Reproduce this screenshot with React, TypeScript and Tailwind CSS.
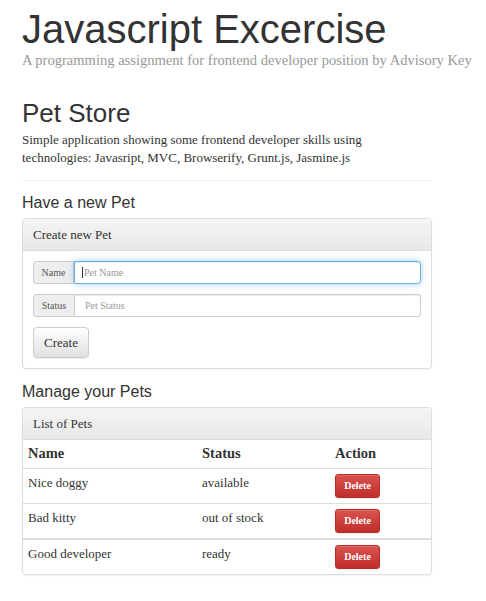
import React from "react";

const serif = "font-['Liberation_Serif','Times_New_Roman',serif]";
const sans = "font-['Liberation_Sans',Arial,sans-serif]";

function Panel({ title, children }: { title: string; children: React.ReactNode }) {
  return (
    <div className="w-[410px] mt-[5px] border border-[#dddddd] rounded-[4px] bg-white shadow-[0_1px_2px_rgba(0,0,0,0.05)] overflow-hidden">
      <div className={`h-[32px] box-border border-b border-[#dddddd] bg-[linear-gradient(to_bottom,#f5f5f5,#e8e8e8)] flex items-center px-[10px] text-[13px] text-[#333333] ${serif}`}>
        {title}
      </div>
      {children}
    </div>
  );
}

function DeleteButton() {
  return (
    <button className={`block w-[45px] h-[24px] rounded-[3px] border border-[#b92c28] bg-[linear-gradient(to_bottom,#d9534f,#c12e2a)] text-white text-[10px] font-bold shadow-[inset_0_1px_0_rgba(255,255,255,0.15),0_1px_1px_rgba(0,0,0,0.075)] ${serif}`}>
      Delete
    </button>
  );
}

const pets = [
  { name: "Nice doggy", status: "available" },
  { name: "Bad kitty", status: "out of stock" },
  { name: "Good developer", status: "ready" },
];

export default function App() {
  return (
    <div className="bg-white min-h-[601px] pl-[22px] text-[#333333]">
      <h1 className={`${sans} text-[40px] leading-[44px] pt-[7px] text-[#333333]`}>Javascript Excercise</h1>
      <p className={`${serif} text-[14.55px] leading-[18px] text-[#999999] whitespace-nowrap`}>
        A programming assignment for frontend developer position by Advisory Key
      </p>

      <h2 className={`${sans} text-[26px] leading-[30px] mt-[29px]`}>Pet Store</h2>
      <p className={`${serif} w-[400px] text-[13px] leading-[18px] mt-[3px]`}>
        Simple application showing some frontend developer skills using technologies: Javasript, MVC, Browserify, Grunt.js, Jasmine.js
      </p>
      <hr className="w-[410px] mt-[13px] border-0 border-t border-[#eeeeee]" />

      <h3 className={`${sans} text-[16px] leading-[20px] mt-[12px]`}>Have a new Pet</h3>
      <Panel title="Create new Pet">
        <div className="p-[10px] flex flex-col gap-[10px]">
          <div className="flex h-[23px]">
            <span className={`w-[41px] shrink-0 flex items-center justify-center bg-[#eeeeee] border border-[#cccccc] rounded-l-[3px] text-[10px] text-[#555555] ${serif}`}>Name</span>
            <div className="relative flex-1">
              <input
                readOnly
                placeholder="Pet Name"
                className={`block w-full h-full box-border border border-[#66afe9] rounded-r-[3px] px-[9px] text-[10px] outline-none placeholder:text-[#999999] shadow-[inset_0_1px_1px_rgba(0,0,0,0.075),0_0_6px_rgba(102,175,233,0.6)] ${serif}`}
              />
              <span className="absolute left-[8px] top-[6px] w-px h-[11px] bg-[#333333]" />
            </div>
          </div>
          <div className="flex h-[23px]">
            <span className={`w-[42px] shrink-0 flex items-center justify-center bg-[#eeeeee] border border-[#cccccc] rounded-l-[3px] text-[10px] text-[#555555] ${serif}`}>Status</span>
            <input
              readOnly
              placeholder="Pet Status"
              className={`block flex-1 h-full box-border border border-l-0 border-[#cccccc] rounded-r-[3px] px-[10px] text-[10px] outline-none placeholder:text-[#999999] shadow-[inset_0_1px_1px_rgba(0,0,0,0.075)] ${serif}`}
            />
          </div>
          <div className="flex">
            <button className={`block w-[56px] h-[31px] rounded-[4px] border border-[#cccccc] bg-[linear-gradient(to_bottom,#ffffff,#e0e0e0)] text-[13px] text-[#333333] shadow-[inset_0_1px_0_rgba(255,255,255,0.15),0_1px_1px_rgba(0,0,0,0.075)] ${serif}`}>
              Create
            </button>
          </div>
        </div>
      </Panel>

      <h3 className={`${sans} text-[16px] leading-[20px] mt-[13px]`}>Manage your Pets</h3>
      <Panel title="List of Pets">
        <div className={`${serif}`}>
          <div className="grid grid-cols-[174px_133px_1fr] h-[29px] box-border border-b border-[#dddddd] items-center text-[14.5px] font-bold">
            <div className="px-[5px]">Name</div>
            <div className="px-[5px]">Status</div>
            <div className="px-[5px]">Action</div>
          </div>
          {pets.map((p, i) => (
            <div
              key={p.name}
              className={`grid grid-cols-[174px_133px_1fr] items-start py-[5px] text-[13px] leading-[18px] ${i === 0 ? "border-b border-[#dddddd]" : i === 1 ? "border-b-2 border-[#dddddd]" : ""}`}
            >
              <div className="px-[5px]">{p.name}</div>
              <div className="px-[5px]">{p.status}</div>
              <div className="px-[5px] flex"><DeleteButton /></div>
            </div>
          ))}
        </div>
      </Panel>
    </div>
  );
}
